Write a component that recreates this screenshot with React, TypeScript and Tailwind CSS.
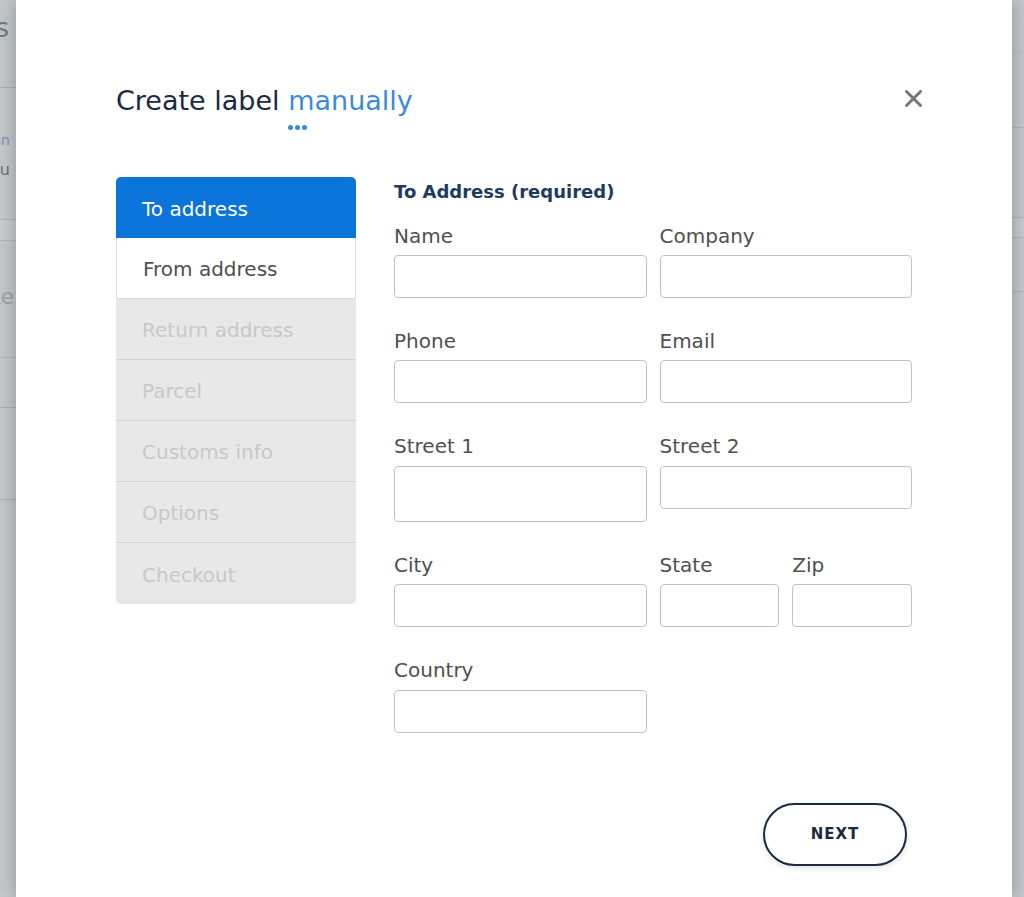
import React from "react";

const font = { fontFamily: '"DejaVu Sans", "Open Sans", sans-serif' };

function Field({ label, tall = false, gap = "mb-[7px]" }: { label: string; tall?: boolean; gap?: string }) {
  return (
    <div className="flex flex-col">
      <label className={`text-[20px] leading-6 text-[#505050] ${gap}`}>{label}</label>
      <input
        className={`w-full ${tall ? "h-[56px]" : "h-[43px]"} rounded-[4px] border border-[#c2c2c2] bg-white outline-none`}
      />
    </div>
  );
}

const steps = [
  { name: "To address", state: "active" },
  { name: "From address", state: "enabled" },
  { name: "Return address", state: "disabled" },
  { name: "Parcel", state: "disabled" },
  { name: "Customs info", state: "disabled" },
  { name: "Options", state: "disabled" },
  { name: "Checkout", state: "disabled" },
];

export default function App() {
  return (
    <div className="relative h-[897px] w-[1024px] overflow-hidden bg-[#c3c9cb]" style={font}>
      {/* dimmed page behind the modal */}
      <div className="flex h-full">
        <div className="flex w-[16px] flex-col">
          <div className="flex h-[88px] items-start border-b border-[#aeb4b6] pt-[12px]">
            <div className="flex w-[9px] justify-end whitespace-nowrap text-[26px] leading-8 text-[#6e7c86]">
              Shipments
            </div>
          </div>
          <div className="flex h-[132px] flex-col border-b border-[#b3b9bb] pt-[42px]">
            <div className="flex w-[10px] justify-end whitespace-nowrap text-[14px] leading-5 text-[#7895b1]">
              Scann
            </div>
            <div className="mt-[10px] flex w-[10px] justify-end whitespace-nowrap text-[16px] leading-5 text-[#6c7274]">
              Produ
            </div>
          </div>
          <div className="h-[20px] bg-[#c8cdcf]" />
          <div className="flex h-[118px] items-start border-b border-t border-[#b3b9bb] pt-[42px]">
            <div className="flex w-[14px] justify-end whitespace-nowrap text-[22px] leading-7 text-[#9ca3a6]">
              Re
            </div>
          </div>
          <div className="h-[50px] border-b border-[#aeb4b6]" />
          <div className="h-[92px] border-b border-[#aeb4b6]" />
        </div>
        <div className="flex-1" />
        <div className="flex w-[12px] flex-col">
          <div className="h-[52px] border-b border-[#bcc2c4]" />
          <div className="h-[76px] border-b border-[#b2b8ba]" />
          <div className="h-[90px] border-b border-[#b2b8ba]" />
          <div className="h-[20px] border-b border-[#b2b8ba] bg-[#c8cdcf]" />
          <div className="h-[54px] border-b border-[#b2b8ba]" />
        </div>
      </div>

      {/* modal */}
      <div className="absolute left-[16px] top-0 h-[897px] w-[996px] bg-white px-[100px] pt-[83px] shadow-[0_0_18px_rgba(0,0,0,0.28)]">
        <div className="flex items-start justify-between">
          <h1 className="whitespace-nowrap text-[27px] font-normal leading-9 text-[#1b2a41]">
            Create label{" "}
            <span className="relative text-[#3b8ad9]">
              manually
              <span className="absolute left-0 top-[40px] flex gap-[2px]">
                <span className="h-[5px] w-[5px] rounded-full bg-[#3b8ad9]" />
                <span className="h-[5px] w-[5px] rounded-full bg-[#3b8ad9]" />
                <span className="h-[5px] w-[5px] rounded-full bg-[#3b8ad9]" />
              </span>
            </span>
          </h1>
          <button className="-mr-[10px] mt-[7px] flex h-[17px] w-[17px] items-center justify-center">
            <svg width="17" height="17" viewBox="0 0 17 17">
              <path d="M1.5 1.5 L15.5 15.5 M15.5 1.5 L1.5 15.5" stroke="#777777" strokeWidth="3" strokeLinecap="round" />
            </svg>
          </button>
        </div>

        <div className="mt-[58px] flex gap-[38px]">
          <nav className="flex w-[240px] flex-col self-start overflow-hidden rounded-[5px]">
            {steps.map((s, i) => {
              const base = "flex h-[61px] items-center pl-[26px] pt-[2px] text-[20px] whitespace-nowrap";
              if (s.state === "active")
                return (
                  <div key={i} className={`${base} bg-[#0a74da] text-white`}>
                    {s.name}
                  </div>
                );
              if (s.state === "enabled")
                return (
                  <div key={i} className={`${base} border-x border-b border-[#dcdcdc] bg-white text-[#4f4f4f]`}>
                    {s.name}
                  </div>
                );
              return (
                <div
                  key={i}
                  className={`${base} bg-[#e8e8e8] text-[#c8c8c8] ${i < steps.length - 1 ? "border-b border-[#d2d2d2]" : ""}`}
                >
                  {s.name}
                </div>
              );
            })}
          </nav>

          <div className="flex w-[518px] flex-col">
            <h2 className="mb-[17px] whitespace-nowrap text-[18px] font-bold leading-[30px] text-[#1d3b5f]">
              To Address (required)
            </h2>
            <div className="grid grid-cols-2 items-start gap-x-[13px] gap-y-[31px]">
              <Field label="Name" />
              <Field label="Company" />
              <Field label="Phone" />
              <Field label="Email" />
              <Field label="Street 1" tall gap="mb-[8px]" />
              <Field label="Street 2" gap="mb-[8px]" />
              <Field label="City" />
              <div className="grid grid-cols-2 gap-x-[13px]">
                <Field label="State" />
                <Field label="Zip" />
              </div>
              <Field label="Country" gap="mb-[8px]" />
            </div>
            <div className="mr-[5px] mt-[70px] flex justify-end">
              <button className="h-[63px] w-[144px] rounded-full border-2 border-[#1b2a41] bg-white text-[15px] font-bold tracking-[1px] text-[#1b2a41] shadow-[0_2px_6px_rgba(0,0,0,0.12)]">
                NEXT
              </button>
            </div>
          </div>
        </div>
      </div>
    </div>
  );
}
